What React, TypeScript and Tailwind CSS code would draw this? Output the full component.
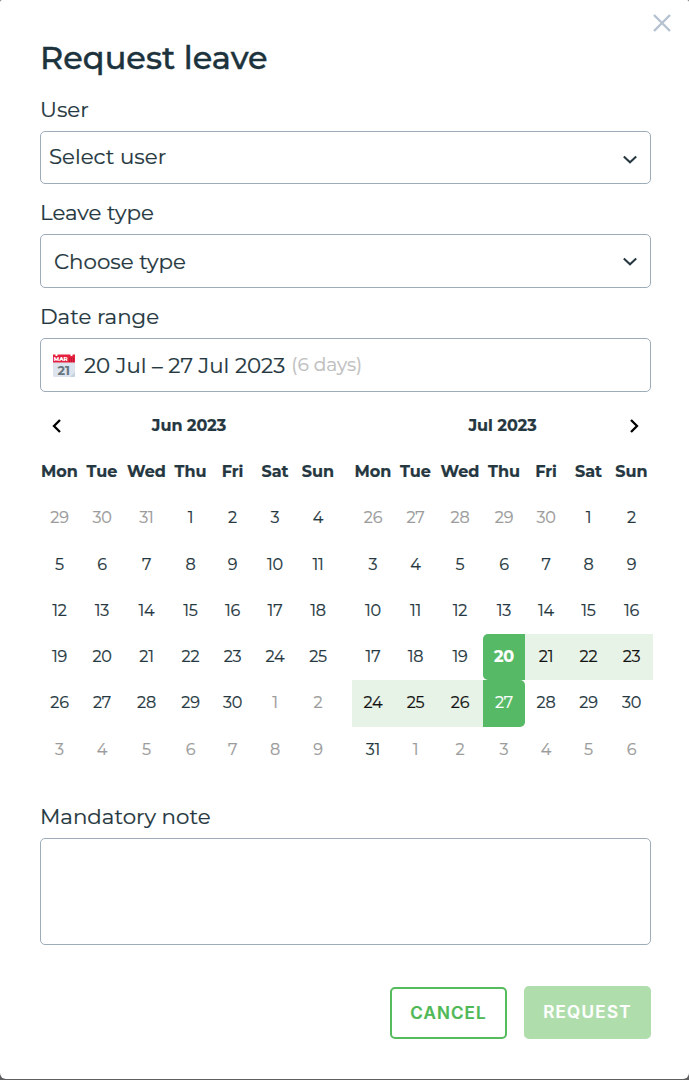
import { useState } from 'react';
import clsx from 'clsx';

const weekdays = ['Mon', 'Tue', 'Wed', 'Thu', 'Fri', 'Sat', 'Sun'];

interface MonthProps {
  title: string;
  // how many days of the previous month fill the first week
  lead: number;
  prevLength: number;
  length: number;
  start?: number;
  end?: number;
}

function Chevron({ d, className }: { d: string; className: string }) {
  return (
    <svg
      viewBox="0 0 16 16"
      className={clsx('w-4 h-4 shrink-0', className)}
      fill="none"
      stroke="currentColor"
    >
      <path d={d} />
    </svg>
  );
}

function CalendarIcon() {
  return (
    <svg viewBox="0 0 22 23" className="w-[22px] h-[23px] shrink-0">
      <rect x="0" y="2" width="22" height="21" rx="1" fill="#dde4ed" />
      <path d="M17 23h4a1 1 0 0 0 1-1v-4z" fill="#c7d2df" />
      <path d="M0 0.500h2.500v1.500h2V0.500h13v1.500h2V0.500H22v8H0z" fill="#e5213f" />
      <text x="0.800" y="6.800" fontSize="5.800" fontWeight="800" fill="#fff" textLength="14" lengthAdjust="spacingAndGlyphs">
        MAR
      </text>
      <path d="M16.500 4v4M18.500 4v4M20.500 4v4" stroke="#a5152e" strokeWidth="0.800" strokeDasharray="1 0.600" />
      <text x="4.500" y="20.800" fontSize="12" fontWeight="700" fill="#66757f" textLength="12.500" lengthAdjust="spacingAndGlyphs">
        21
      </text>
    </svg>
  );
}

function Month({ title, lead, prevLength, length, start = 0, end = 0 }: MonthProps) {
  const days = Array.from({ length: 42 }, (_, i) => {
    const n = i - lead + 1;
    if (n < 1) return { day: prevLength + n, outside: true };
    if (n > length) return { day: n - length, outside: true };
    return { day: n, outside: false };
  });

  return (
    <div className="w-[301px]">
      <div className="h-[45.700px] flex items-center justify-center text-base font-bold">
        {title}
      </div>
      <div className="grid grid-cols-[42px_43px_46px_42px_42px_43px_43px] auto-rows-[46.330px] text-base">
        {weekdays.map((label) => (
          <div key={label} className="flex items-center justify-center font-bold">
            {label}
          </div>
        ))}
        {days.map(({ day, outside }, i) => {
          const isStart = !outside && day === start;
          const isEnd = !outside && day === end;
          const between = !outside && day > start && day < end;
          return (
            <div
              key={i}
              className={clsx(
                'flex items-center justify-center tracking-[-0.200px]',
                outside && 'text-[#9b9b9b]',
                between && 'bg-[#e8f3e7] text-[#111111]',
                isStart && 'bg-[#56b966] text-white font-bold rounded-l-[5px]',
                isEnd && 'bg-[#56b966] text-white rounded-r-[5px]'
              )}
            >
              {day}
            </div>
          );
        })}
      </div>
    </div>
  );
}

export default function App() {
  const [note, setNote] = useState('');

  return (
    <div className="w-[689px] h-[1080px] bg-[#5e5e60] font-['Montserrat','Inter',sans-serif] text-[#253740] [-webkit-text-stroke:0.2px] overflow-hidden">
      <div className="relative h-[1079px] bg-white rounded-t-[2px] rounded-b-[6px] px-10 pt-9">
        <button className="absolute left-[653px] top-[14px] text-[#b5c2d0]" aria-label="Close">
          <svg viewBox="0 0 18 18" className="w-[18px] h-[18px]" stroke="currentColor" strokeWidth="2.400">
            <path d="M1 1l16 16M17 1L1 17" />
          </svg>
        </button>

        <h1 className="h-11 flex items-center text-[32px] font-medium text-[#1c333d] [-webkit-text-stroke:0.4px] whitespace-nowrap">
          Request leave
        </h1>

        <label className="mt-4 h-[35px] flex items-start text-[21.330px] leading-[26px]">User</label>
        <div className="w-[611px] h-[53px] border border-[#9eacba] rounded-[5px] pl-2 pr-3 flex items-center justify-between text-[21.330px]">
          <span className="pb-[2px]">Select user</span>
          <Chevron d="M1.800 5.500L8 11.300l6.200-5.800" className="mt-[3px] stroke-2" />
        </div>

        <label className="mt-[15px] h-[35px] flex items-start text-[21.330px] leading-[26px]">Leave type</label>
        <div className="w-[611px] h-[54px] border border-[#9eacba] rounded-[5px] pl-[13px] pr-3 flex items-center justify-between text-[21.330px]">
          <span className="pt-px">Choose type</span>
          <Chevron d="M1.800 5.500L8 11.300l6.200-5.800" className="stroke-2" />
        </div>

        <label className="mt-[15px] h-[35px] flex items-start text-[21.330px] leading-[26px]">Date range</label>
        <div className="w-[611px] h-[54px] border border-[#9eacba] rounded-[5px] pl-3 flex items-center text-[21.330px]">
          <CalendarIcon />
          <span className="ml-[9px] pt-px">20 Jul – 27 Jul 2023</span>
          <span className="ml-[6px] text-[18.670px] text-[#c0c0c0]">(6 days)</span>
        </div>

        <div className="relative mt-[11px] -ml-[1.500px] flex gap-[12.500px]">
          <Month title="Jun 2023" lead={3} prevLength={31} length={30} />
          <Month title="Jul 2023" lead={5} prevLength={30} length={31} start={20} end={27} />
          <button className="absolute left-[10.500px] top-[15px] text-black" aria-label="Previous month">
            <Chevron d="M11 2L5 8l6 6" className="stroke-[2.300]" />
          </button>
          <button className="absolute left-[587.500px] top-[15px] text-black" aria-label="Next month">
            <Chevron d="M5 2l6 6-6 6" className="stroke-[2.300]" />
          </button>
        </div>

        <label className="mt-[30px] h-[35px] flex items-start text-[21.330px] leading-[26px]">
          Mandatory note
        </label>
        <textarea
          value={note}
          onChange={(e) => setNote(e.target.value)}
          className="block w-[611px] h-[107px] border border-[#9eacba] rounded-[5px] p-3 text-[21.330px] resize-none"
        />

        <div className="mt-[41px] w-[611px] flex justify-end items-end gap-[17px] font-['Inter',sans-serif] font-semibold text-[17px]">
          <button className="w-[117px] h-[52px] pt-px border-2 border-[#55bb5d] rounded-[5px] text-[#4fb857] tracking-[1.100px]">
            CANCEL
          </button>
          <button className="w-[127px] h-[53px] pt-px rounded-[5px] bg-[#afddac] text-white tracking-[1.300px]">
            REQUEST
          </button>
        </div>
      </div>
    </div>
  );
}
